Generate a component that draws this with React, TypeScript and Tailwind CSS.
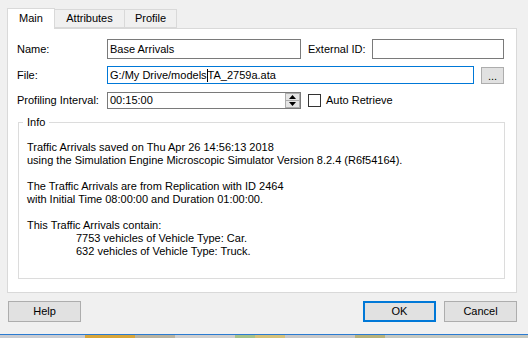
import React from "react";

const font = { fontFamily: '"Liberation Sans", Arial, sans-serif' };

export default function App() {
  return (
    <div
      className="w-[528px] h-[338px] bg-[#f0f0f0] flex flex-col text-[11px] text-black overflow-hidden"
      style={font}
    >
      {/* Tabs */}
      <div className="flex items-end h-[29px] pl-[7px] relative z-10">
        <div className="h-[21px] w-[48px] bg-white border border-[#d9d9d9] border-b-0 flex items-center justify-center pb-[1px]">
          Main
        </div>
        <div className="h-[19px] w-[70px] bg-[#f0f0f0] border border-[#d9d9d9] border-l-0 flex items-center justify-center mb-[1px]">
          Attributes
        </div>
        <div className="h-[19px] w-[52px] bg-[#f0f0f0] border border-[#d9d9d9] border-l-0 flex items-center justify-center mb-[1px]">
          Profile
        </div>
      </div>
      {/* Panel */}
      <div className="ml-[7px] -mt-[1px] w-[510px] h-[265px] bg-white border border-[#d9d9d9] flex flex-col pl-[9px] pt-[10px]">
        {/* Name row */}
        <div className="flex items-center h-[20px]">
          <div className="w-[90px]">Name:</div>
          <div className="w-[194px] h-[20px] border border-[#7a7a7a] flex items-center px-[2px]">
            Base Arrivals
          </div>
          <div className="ml-[7px] w-[64px]">External ID:</div>
          <div className="w-[132px] h-[20px] border border-[#7a7a7a]" />
        </div>
        {/* File row */}
        <div className="flex items-center h-[18px] mt-[7px]">
          <div className="w-[90px]">File:</div>
          <div className="w-[367px] h-[18px] border border-[#0078d7] flex items-center px-[2px]">
            <span>G:/My Drive/models</span>
            <span className="w-[1px] h-[13px] bg-black" />
            <span>TA_2759a.ata</span>
          </div>
          <div className="ml-[7px] w-[23px] h-[17px] bg-[#e1e1e1] border border-[#adadad] flex items-end justify-center pb-[1px] text-[11px] leading-[11px]">
            ...
          </div>
        </div>
        {/* Profiling row */}
        <div className="flex items-center h-[17px] mt-[8px]">
          <div className="w-[90px]">Profiling Interval:</div>
          <div className="w-[194px] h-[17px] border border-[#7a7a7a] flex items-center pl-[2px]">
            <span className="flex-1">00:15:00</span>
            <div className="w-[15px] h-[15px] flex flex-col">
              <div className="flex-1 bg-[#e5e5e5] border border-[#adadad] flex items-center justify-center">
                <svg width="7" height="4" viewBox="0 0 7 4">
                  <path d="M3.5 0 L7 4 L0 4 Z" fill="#000" />
                </svg>
              </div>
              <div className="flex-1 bg-[#e5e5e5] border border-[#adadad] border-t-0 flex items-center justify-center">
                <svg width="7" height="4" viewBox="0 0 7 4">
                  <path d="M0 0 L7 0 L3.5 4 Z" fill="#000" />
                </svg>
              </div>
            </div>
          </div>
          <div className="ml-[7px] w-[13px] h-[13px] border border-[#333] bg-white" />
          <div className="ml-[5px]">Auto Retrieve</div>
        </div>
        {/* Info group */}
        <div className="relative ml-[1px] mt-[13px] w-[487px] h-[157px] border border-[#dcdcdc]">
          <div className="absolute -top-[8px] left-[4px] bg-white px-[4px] leading-[14px]">
            Info
          </div>
          <div className="pl-[8px] pt-[18px] leading-[13px]">
            <div>Traffic Arrivals saved on Thu Apr 26 14:56:13 2018</div>
            <div>using the Simulation Engine Microscopic Simulator Version 8.2.4 (R6f54164).</div>
            <div className="h-[13px]" />
            <div>The Traffic Arrivals are from Replication with ID 2464</div>
            <div>with Initial Time 08:00:00 and Duration 01:00:00.</div>
            <div className="h-[13px]" />
            <div>This Traffic Arrivals contain:</div>
            <div className="pl-[49px]">7753 vehicles of Vehicle Type: Car.</div>
            <div className="pl-[49px]">632 vehicles of Vehicle Type: Truck.</div>
          </div>
        </div>
      </div>
      {/* Buttons */}
      <div className="flex items-center h-[21px] mt-[8px] pl-[8px]">
        <div className="w-[73px] h-[21px] bg-[#e1e1e1] border border-[#adadad] flex items-center justify-center">
          Help
        </div>
        <div className="ml-[282px] w-[73px] h-[21px] bg-[#e1e1e1] border-2 border-[#0078d7] flex items-center justify-center">
          OK
        </div>
        <div className="ml-[8px] w-[73px] h-[21px] bg-[#e1e1e1] border border-[#adadad] flex items-center justify-center">
          Cancel
        </div>
      </div>
      <div className="mt-auto h-[4px] flex flex-col">
        <div className="h-[1px] bg-[#2b7bd1]" />
        <div className="flex-1 flex">
          <div className="w-[85px] bg-[#c9ccd2]" />
          <div className="w-[50px] bg-[#d9a63a]" />
          <div className="w-[40px] bg-[#b9b3a0]" />
          <div className="w-[60px] bg-[#cfcfcf]" />
          <div className="w-[20px] bg-[#a7c28a]" />
          <div className="w-[30px] bg-[#d6c27a]" />
          <div className="w-[70px] bg-[#c8c8c8]" />
          <div className="w-[30px] bg-[#b8b27a]" />
          <div className="flex-1 bg-[#c5c8c0]" />
        </div>
      </div>
    </div>
  );
}
